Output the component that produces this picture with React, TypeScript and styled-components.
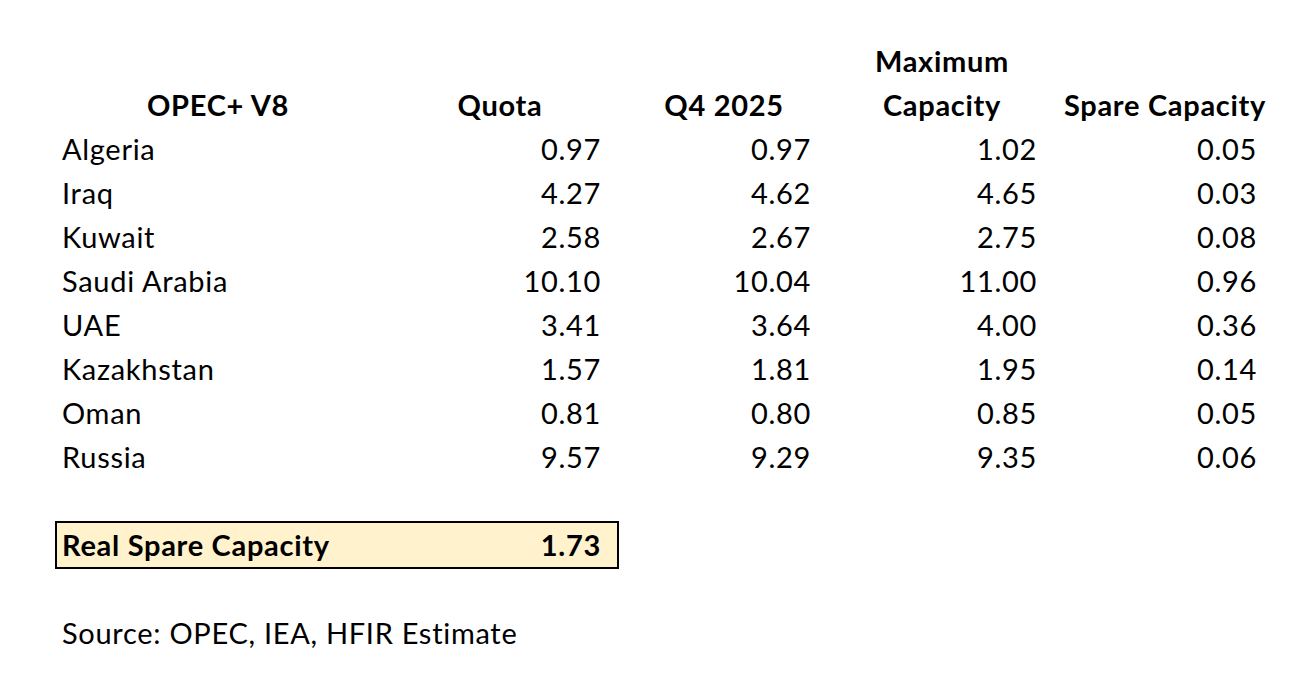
import React from "react";
import styled, { createGlobalStyle } from "styled-components";

const Global = createGlobalStyle`
  html, body { margin: 0; padding: 0; background: #ffffff; }
  body { font-family: "Lato", "Liberation Sans", sans-serif; color: #000; }
`;

const Page = styled.div`
  width: 1306px;
  height: 690px;
  padding: 39px 0 0 55px;
  box-sizing: border-box;
`;

const Grid = styled.div`
  display: grid;
  grid-template-columns: 326px 238px 210px 226px 220px;
  grid-auto-rows: 44px;
  font-size: 29px;
  letter-spacing: 0.7px;
  line-height: 44px;
`;

const Head = styled.div`
  grid-row: 1 / span 2;
  display: flex;
  flex-direction: column;
  justify-content: flex-end;
  align-items: center;
  font-weight: 700;
  white-space: nowrap;
`;

const Name = styled.div`
  padding-left: 7px;
  white-space: nowrap;
`;

const Num = styled.div`
  text-align: right;
  padding-right: 18px;
`;

const Spacer = styled.div`
  grid-column: 1 / -1;
`;

const TotalBox = styled.div`
  grid-column: 1 / span 2;
  display: grid;
  grid-template-columns: 324px 236px;
  background: #fff2cc;
  border: 2px solid #000;
  margin-top: -2px;
  height: 44px;
  line-height: 44px;
  font-weight: 700;
`;

const TotalLabel = styled.div`
  padding-left: 5px;
  white-space: nowrap;
`;

const TotalNum = styled.div`
  text-align: right;
  padding-right: 16px;
`;

const Source = styled.div`
  grid-column: 1 / -1;
  padding-left: 7px;
  white-space: nowrap;
`;

const rows: [string, string, string, string, string][] = [
  ["Algeria", "0.97", "0.97", "1.02", "0.05"],
  ["Iraq", "4.27", "4.62", "4.65", "0.03"],
  ["Kuwait", "2.58", "2.67", "2.75", "0.08"],
  ["Saudi Arabia", "10.10", "10.04", "11.00", "0.96"],
  ["UAE", "3.41", "3.64", "4.00", "0.36"],
  ["Kazakhstan", "1.57", "1.81", "1.95", "0.14"],
  ["Oman", "0.81", "0.80", "0.85", "0.05"],
  ["Russia", "9.57", "9.29", "9.35", "0.06"],
];

export default function App() {
  return (
    <>
      <Global />
      <Page>
        <Grid>
          <Head>OPEC+ V8</Head>
          <Head>Quota</Head>
          <Head>Q4 2025</Head>
          <Head>
            <span>Maximum</span>
            <span>Capacity</span>
          </Head>
          <Head>Spare Capacity</Head>
          {rows.map((r) => (
            <React.Fragment key={r[0]}>
              <Name>{r[0]}</Name>
              <Num>{r[1]}</Num>
              <Num>{r[2]}</Num>
              <Num>{r[3]}</Num>
              <Num>{r[4]}</Num>
            </React.Fragment>
          ))}
          <Spacer />
          <TotalBox>
            <TotalLabel>Real Spare Capacity</TotalLabel>
            <TotalNum>1.73</TotalNum>
          </TotalBox>
          <Spacer />
          <Source>Source: OPEC, IEA, HFIR Estimate</Source>
        </Grid>
      </Page>
    </>
  );
}
